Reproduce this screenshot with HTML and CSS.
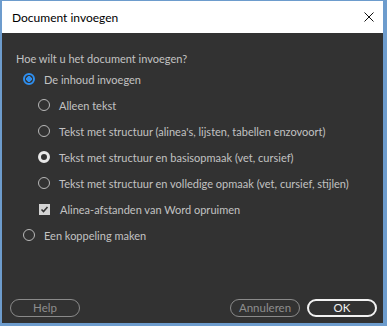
FILE: index.html
```html
<!DOCTYPE html>
<html lang="nl">
<head>
    <meta charset="UTF-8">
    <title>Document invoegen</title>
    <link rel="stylesheet" href="styles.css">
</head>
<body>
    <div class="window">
        <div class="titlebar">
            <span class="title">Document invoegen</span>
            <svg class="close" width="10" height="10" viewBox="0 0 10 10">
                <path d="M0.5 0.5 L9.5 9.5 M9.5 0.5 L0.5 9.5" stroke="#111" stroke-width="1" fill="none"/>
            </svg>
        </div>
        <div class="content">
            <p class="question">Hoe wilt u het document invoegen?</p>
            <div class="option level1">
                <span class="radio radio-on"></span>
                <span>De inhoud invoegen</span>
            </div>
            <div class="option level2">
                <span class="radio"></span>
                <span>Alleen tekst</span>
            </div>
            <div class="option level2">
                <span class="radio"></span>
                <span>Tekst met structuur (alinea's, lijsten, tabellen enzovoort)</span>
            </div>
            <div class="option level2">
                <span class="radio radio-sel"></span>
                <span>Tekst met structuur en basisopmaak (vet, cursief)</span>
            </div>
            <div class="option level2">
                <span class="radio"></span>
                <span>Tekst met structuur en volledige opmaak (vet, cursief, stijlen)</span>
            </div>
            <div class="option level2">
                <span class="check">
                    <svg width="11" height="11" viewBox="0 0 11 11">
                        <path d="M2.5 5.5 L4.5 7.5 L8.5 3" stroke="#333" stroke-width="1.6" fill="none"/>
                    </svg>
                </span>
                <span>Alinea-afstanden van Word opruimen</span>
            </div>
            <div class="option level1">
                <span class="radio"></span>
                <span>Een koppeling maken</span>
            </div>
        </div>
        <div class="buttons">
            <button class="btn">Help</button>
            <span class="spacer"></span>
            <button class="btn">Annuleren</button>
            <button class="btn btn-ok">OK</button>
        </div>
    </div>
</body>
</html>
```

FILE: styles.css
```css
body {
    margin: 0;
    padding: 1px 0 0 2px;
    font-family: Lato, "Open Sans", sans-serif;
    font-size: 11px;
    background-color: #6d9ccd;
}

.window {
    width: 381px;
    height: 322px;
    display: flex;
    flex-direction: column;
    background-color: #323232;
}

.titlebar {
    height: 32px;
    background-color: #ffffff;
    display: flex;
    align-items: center;
    justify-content: space-between;
    padding: 0 9px 0 10px;
}

.title {
    color: #000;
    font-size: 12px;
}

.content {
    flex: 1;
    padding: 18px 0 0 14px;
    color: #c2c2c2;
}

.question {
    margin: 0;
    height: 15px;
    line-height: 15px;
}

.option {
    display: flex;
    align-items: center;
    height: 26px;
    white-space: nowrap;
}

.level1 {
    padding-left: 7px;
}

.level2 {
    padding-left: 22px;
}

.radio {
    box-sizing: border-box;
    width: 12px;
    height: 12px;
    border-radius: 50%;
    border: 1.5px solid #b8b8b8;
    margin-right: 9px;
}

.radio-on {
    border: 2px solid #2e8ff0;
    background: radial-gradient(circle, #2e8ff0 0 2.6px, #323232 3px);
}

.radio-sel {
    border: 3px solid #e8e8e8;
}

.check {
    width: 11px;
    height: 11px;
    margin-left: 1px;
    background-color: #d4d4d4;
    margin-right: 10px;
    display: flex;
}

.buttons {
    display: flex;
    align-items: center;
    padding: 0 6px 6px 8px;
    gap: 7px;
}

.spacer {
    flex: 1;
}

.btn {
    width: 70px;
    height: 18px;
    border-radius: 9px;
    border: 1px solid #8a8a8a;
    background: transparent;
    color: #8e8e8e;
    font-family: Lato, "Open Sans", sans-serif;
    font-size: 11.5px;
    padding: 0;
    line-height: 14px;
}

.btn-ok {
    border: 2px solid #f2f2f2;
    color: #f2f2f2;
}
```
